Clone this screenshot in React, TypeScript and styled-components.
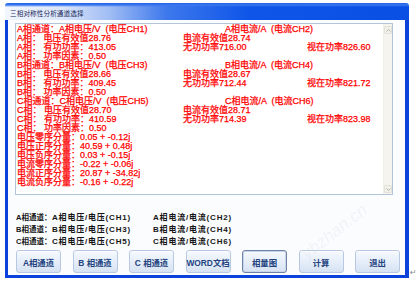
import React from 'react';
import styled, { createGlobalStyle } from 'styled-components';

const GlobalStyle = createGlobalStyle`
  html, body { margin: 0; padding: 0; background: #ffffff; }
  body { font-family: "Noto Sans CJK SC", "Noto Sans", sans-serif; }
`;

const Page = styled.div`
  width: 417px;
  height: 284px;
  box-sizing: border-box;
  padding: 3px 0 0 5px;
  display: flex;
  align-items: flex-start;
  position: relative;
  overflow: hidden;
`;

const Window = styled.div`
  width: 404px;
  height: 275px;
  flex: none;
  display: flex;
  flex-direction: column;
`;

const TitleBar = styled.div`
  height: 17px;
  flex: none;
  box-sizing: border-box;
  display: flex;
  align-items: center;
  padding: 3px 0 0 5px;
  border-radius: 3px 3px 0 0;
  background:
    linear-gradient(to bottom, #1d5fe8 0px, #3b78ee 2px, rgba(60,120,238,0) 4px),
    linear-gradient(to right, #f2f6fe 0%, #dbe6fb 14%, #9fbcf4 26%, #3d78ec 40%, #0f56e8 60%, #0a4fe4 100%);
  font-size: 6.6px;
  line-height: 1;
  color: #1b2b58;
  letter-spacing: 0.1px;
`;

const Body = styled.div`
  flex: 1;
  display: flex;
  flex-direction: column;
  border-style: solid;
  border-color: #0b42dc;
  border-width: 0 4px 3px 3px;
  background: #fbfcfe;
  padding: 3px 0 0 7px;
`;

const TextBox = styled.div`
  width: 378px;
  height: 172px;
  box-sizing: border-box;
  flex: none;
  display: flex;
  border: 1px solid #b3c3da;
  background: #ffffff;
`;

const Content = styled.div`
  flex: 1;
  padding: 1px 0 0 1px;
  overflow: hidden;
`;

const Line = styled.div<{ $kind: 'head' | 'data' }>`
  display: grid;
  grid-template-columns: ${(p) => (p.$kind === 'head' ? '208px 1fr' : '166px 124px 1fr')};
  height: 9px;
  font-family: "Liberation Sans", "Noto Sans CJK SC", sans-serif;
  font-size: 9px;
  line-height: 9px;
  color: #ff0000;
  -webkit-text-stroke: 0.25px #ff0000;
  white-space: pre;
`;

const Scrollbar = styled.div`
  width: 8px;
  flex: none;
  display: flex;
  flex-direction: column;
  justify-content: space-between;
  background: #f5f4ef;
  border-left: 1px solid #efeee8;
  padding: 2px 0 1px;
`;

const ScrollButton = styled.div`
  height: 8px;
  display: flex;
  align-items: center;
  justify-content: center;
  background: #f1f1ea;
  border: 1px solid #e2e2da;
  border-radius: 1px;
  box-sizing: border-box;
`;

const Labels = styled.div`
  margin: 17px 0 0 1px;
  display: flex;
  flex-direction: column;
`;

const LabelRow = styled.div`
  display: grid;
  grid-template-columns: 36px 101px 1fr;
  height: 12px;
  font-family: "Liberation Sans", "Noto Sans CJK SC", sans-serif;
  line-height: 12px;
  color: #151515;
  font-weight: 700;
  white-space: pre;
`;

const LabelKey = styled.span`
  font-size: 7.5px;
`;

const LabelValue = styled.span`
  font-size: 8px;
  letter-spacing: 0.8px;
`;

const ButtonRow = styled.div`
  margin: 2px 0 0 1px;
  width: 384px;
  display: flex;
  justify-content: space-between;
`;

const Button = styled.div<{ $active?: boolean }>`
  width: 45px;
  height: 23px;
  box-sizing: border-box;
  display: flex;
  align-items: center;
  justify-content: center;
  border-radius: 3px;
  border: 1px solid ${(p) => (p.$active ? '#6f82a6' : '#b7c8e0')};
  background: linear-gradient(to bottom, #f6f9fe 0%, #e6eef9 50%, #d6e2f3 100%);
  box-shadow: ${(p) => (p.$active ? 'inset 0 0 0 1px #c9d6ea' : 'inset 0 1px 0 #ffffff')};
  font-family: "Liberation Sans", "Noto Sans CJK SC", sans-serif;
  font-size: 8.4px;
  font-weight: 700;
  color: #23437f;
  white-space: pre;
`;

const Mark = styled.span`
  align-self: flex-end;
  margin: 0 0 7px 1px;
  font-size: 8px;
  line-height: 8px;
  color: #8a8a8a;
  font-family: "DejaVu Sans", sans-serif;
`;

const Watermark = styled.div`
  position: absolute;
  left: 296px;
  top: 222px;
  transform: rotate(-38deg);
  font-family: "Liberation Sans", sans-serif;
  font-size: 17px;
  font-style: italic;
  color: rgba(200, 205, 215, 0.2);
  pointer-events: none;
`;

type Row = { kind: 'head' | 'data'; cells: string[] };

const rows: Row[] = [
  { kind: 'head', cells: ['A相通道：A相电压/V  (电压CH1)', 'A相电流/A  (电流CH2)'] },
  { kind: 'data', cells: ['A相： 电压有效值28.76', '电流有效值28.74'] },
  { kind: 'data', cells: ['A相： 有功功率：413.05', '无功功率716.00', '视在功率826.60'] },
  { kind: 'data', cells: ['A相： 功率因素：0.50'] },
  { kind: 'head', cells: ['B相通道：B相电压/V  (电压CH3)', 'B相电流/A  (电流CH4)'] },
  { kind: 'data', cells: ['B相： 电压有效值28.66', '电流有效值28.67'] },
  { kind: 'data', cells: ['B相： 有功功率：409.45', '无功功率712.44', '视在功率821.72'] },
  { kind: 'data', cells: ['B相： 功率因素：0.50'] },
  { kind: 'head', cells: ['C相通道：C相电压/V  (电压CH5)', 'C相电流/A  (电流CH6)'] },
  { kind: 'data', cells: ['C相： 电压有效值28.70', '电流有效值28.71'] },
  { kind: 'data', cells: ['C相： 有功功率：410.59', '无功功率714.39', '视在功率823.98'] },
  { kind: 'data', cells: ['C相： 功率因素：0.50'] },
  { kind: 'data', cells: ['电压零序分量：0.05 + -0.12j'] },
  { kind: 'data', cells: ['电压正序分量：40.59 + 0.48j'] },
  { kind: 'data', cells: ['电压负序分量：0.03 + -0.15j'] },
  { kind: 'data', cells: ['电流零序分量：-0.22 + -0.06j'] },
  { kind: 'data', cells: ['电流正序分量：20.87 + -34.82j'] },
  { kind: 'data', cells: ['电流负序分量：-0.16 + -0.22j'] },
];

const labels = [
  ['A相通道：', 'A相电压/电压(CH1)', 'A相电流/电流(CH2)'],
  ['B相通道：', 'B相电压/电压(CH3)', 'B相电流/电流(CH4)'],
  ['C相通道：', 'C相电压/电压(CH5)', 'C相电流/电流(CH6)'],
];

const buttons = ['A相通道', 'B 相通道', 'C 相通道', 'WORD文档', '相量图', '计算', '退出'];

const Arrow = ({ up }: { up?: boolean }) => (
  <svg width="5" height="3" viewBox="0 0 5 3">
    <path d={up ? 'M0.5 2.5 L2.5 0.5 L4.5 2.5' : 'M0.5 0.5 L2.5 2.5 L4.5 0.5'} fill="none" stroke="#a9a9a0" strokeWidth="0.9" />
  </svg>
);

export default function App() {
  return (
    <>
      <GlobalStyle />
      <Page>
        <Window>
          <TitleBar>三相对称性分析通道选择</TitleBar>
          <Body>
            <TextBox>
              <Content>
                {rows.map((r, i) => (
                  <Line key={i} $kind={r.kind}>
                    {r.cells.map((c, j) => (
                      <span key={j}>{c}</span>
                    ))}
                  </Line>
                ))}
              </Content>
              <Scrollbar>
                <ScrollButton>
                  <Arrow up />
                </ScrollButton>
                <ScrollButton>
                  <Arrow />
                </ScrollButton>
              </Scrollbar>
            </TextBox>
            <Labels>
              {labels.map(([key, v1, v2], i) => (
                <LabelRow key={i}>
                  <LabelKey>{key}</LabelKey>
                  <LabelValue>{v1}</LabelValue>
                  <LabelValue>{v2}</LabelValue>
                </LabelRow>
              ))}
            </Labels>
            <ButtonRow>
              {buttons.map((b) => (
                <Button key={b} $active={b === '相量图'}>
                  {b}
                </Button>
              ))}
            </ButtonRow>
          </Body>
        </Window>
        <Mark>↵</Mark>
        <Watermark>ybzhan.cn</Watermark>
      </Page>
    </>
  );
}
